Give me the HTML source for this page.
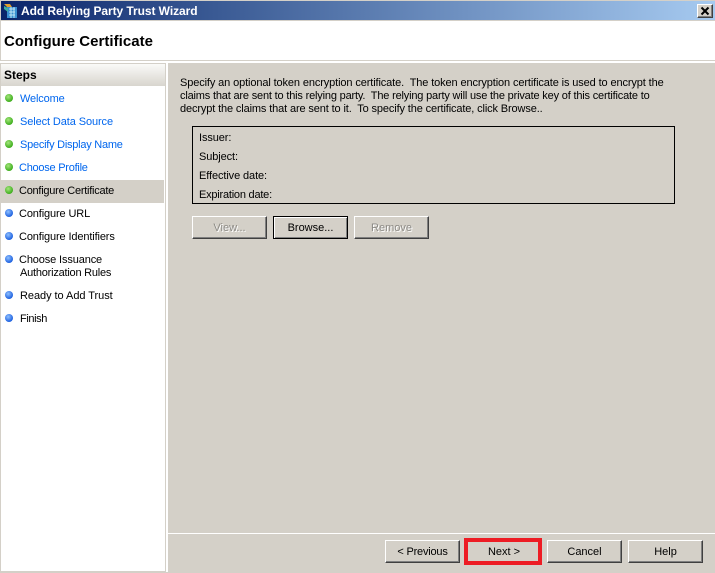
<!DOCTYPE html>
<html><head><meta charset="utf-8"><style>
html,body{margin:0;padding:0;width:715px;height:573px;overflow:hidden;background:#d4d0c8}
body{position:relative;font:11px/14px "Liberation Sans",sans-serif;color:#000}
div,span{position:absolute;white-space:nowrap;box-sizing:border-box}
.tb{left:1px;top:1px;width:714px;height:19px;background:linear-gradient(90deg,#0a246a 0,#3a5a94 30%,#a6caf0 100%)}
.b{height:23px;background:#d4d0c8;border:1px solid;border-color:#fff #404040 #404040 #fff;box-shadow:inset -1px -1px 0 #808080;text-align:center;line-height:23px}
.d{color:#8c8a85;text-shadow:1px 1px 0 #fff}
.dot{left:5px;width:8px;height:8px;border-radius:50%}
.g{background:radial-gradient(circle at 40% 35%,#a4e67c,#3fae1e 70%)}
.u{background:radial-gradient(circle at 40% 35%,#8fc0ff,#1f62e0 70%)}
.l{left:20px;color:#0066ee;letter-spacing:-.1px}
.k{left:19px;color:#000;letter-spacing:-.13px}
.f{left:199px;letter-spacing:-.1px}
.p{left:180px}
</style></head><body>
<div style="left:0;top:0;width:715px;height:1px;background:#d4d0c8"></div>
<div class="tb"></div>
<svg style="position:absolute;left:3px;top:3px" width="16" height="16" viewBox="0 0 16 16"><path d="M1 1h6l2 3H4z" fill="#e0a030"/><rect x="4" y="4" width="10" height="11" fill="#3a8fd0"/><path d="M6 6h6M6 9h6M6 12h6M8 4v11M11 4v11" stroke="#bfe6f5" stroke-width="1"/><path d="M1 3l4 2v4L1 6z" fill="#40b0a0"/></svg>
<span style="left:21px;top:4px;color:#fff;font-weight:bold;font-size:12px;letter-spacing:-.07px">Add Relying Party Trust Wizard</span>
<div class="b" style="left:697px;top:4px;width:16px;height:14px;line-height:12px;box-shadow:inset -1px -1px 0 #808080"><svg style="position:absolute;left:2px;top:1px" width="10" height="10" viewBox="0 0 10 10"><path d="M1.5 1.5l7 7M8.5 1.5l-7 7" stroke="#000" stroke-width="2"/></svg></div>
<div style="left:1px;top:21px;width:714px;height:39px;background:#fff"></div>
<span style="left:4px;top:34px;font-size:15px;line-height:16px;font-weight:bold;letter-spacing:.03px">Configure Certificate</span>
<div style="left:0;top:60px;width:715px;height:1px;background:#d4d0c8"></div>
<div style="left:0;top:61px;width:715px;height:2px;background:#fff"></div>
<div style="left:1px;top:64px;width:164px;height:507px;background:#fff"></div>
<div style="left:1px;top:64px;width:164px;height:22px;background:linear-gradient(#fafaf8,#d8d5ce)"></div>
<div style="left:165px;top:63px;width:3px;height:509px;background:#fff;border-left:1px solid #d4d0c8"></div>
<span style="left:4px;top:68px;font-weight:bold;font-size:12px">Steps</span>
<div style="left:1px;top:180px;width:163px;height:23px;background:#d4d0c8"></div>
<div class="dot g" style="top:94px"></div><span class="l" style="top:92px;letter-spacing:-.15px">Welcome</span>
<div class="dot g" style="top:117px"></div><span class="l" style="top:115px">Select Data Source</span>
<div class="dot g" style="top:140px"></div><span class="l" style="top:138px;letter-spacing:-.25px">Specify Display Name</span>
<div class="dot g" style="top:163px"></div><span class="l" style="top:161px;left:19px;letter-spacing:-.25px">Choose Profile</span>
<div class="dot g" style="top:186px"></div><span class="k" style="top:184px;letter-spacing:-.25px">Configure Certificate</span>
<div class="dot u" style="top:209px"></div><span class="k" style="top:207px">Configure URL</span>
<div class="dot u" style="top:232px"></div><span class="k" style="top:230px">Configure Identifiers</span>
<div class="dot u" style="top:255px"></div><span class="k" style="top:253px">Choose Issuance</span><span class="k" style="top:266px;left:20px;letter-spacing:-.22px">Authorization Rules</span>
<div class="dot u" style="top:291px"></div><span class="k" style="top:289px;left:20px;letter-spacing:-.05px">Ready to Add Trust</span>
<div class="dot u" style="top:314px"></div><span class="k" style="top:312px;left:20px;letter-spacing:-.4px">Finish</span>
<span class="p" style="top:76px;letter-spacing:-.12px">Specify an optional token encryption certificate.&nbsp; The token encryption certificate is used to encrypt the</span>
<span class="p" style="top:89px;letter-spacing:-.18px">claims that are sent to this relying party.&nbsp; The relying party will use the private key of this certificate to</span>
<span class="p" style="top:102px;letter-spacing:-.13px">decrypt the claims that are sent to it.&nbsp; To specify the certificate, click Browse..</span>
<div style="left:192px;top:126px;width:483px;height:78px;border:1px solid #000"></div>
<span class="f" style="top:131px">Issuer:</span>
<span class="f" style="top:150px">Subject:</span>
<span class="f" style="top:169px">Effective date:</span>
<span class="f" style="top:188px;letter-spacing:-.22px">Expiration date:</span>
<div class="b d" style="left:192px;top:216px;width:75px">View...</div>
<div class="b" style="left:273px;top:216px;width:75px;border:1px solid #000;box-shadow:inset 1px 1px 0 #fff,inset -1px -1px 0 #808080">Browse...</div>
<div class="b d" style="left:354px;top:216px;width:75px">Remove</div>
<div style="left:168px;top:533px;width:547px;height:1px;background:#fff"></div>
<div class="b" style="left:385px;top:540px;width:75px;letter-spacing:-.2px">&lt; Previous</div>
<div style="left:464px;top:538px;width:78px;height:27px;border:4px solid #ed1c24"></div>
<span style="left:465px;top:545px;width:78px;text-align:center">Next &gt;</span>
<div class="b" style="left:547px;top:540px;width:75px">Cancel</div>
<div class="b" style="left:628px;top:540px;width:75px">Help</div>
</body></html>
